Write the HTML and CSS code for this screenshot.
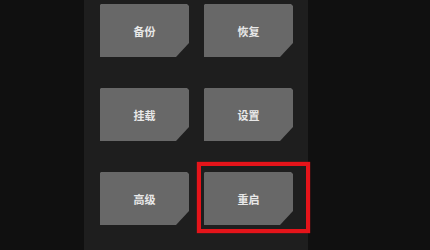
FILE: index.html
```html
<!DOCTYPE html>
<html lang="zh-CN">
<head>
<meta charset="utf-8">
<link rel="stylesheet" href="styles.css">
</head>
<body>
<div class="screen">
  <div class="panel">
    <div class="grid">
      <div class="cell"><div class="btn">备份</div></div>
      <div class="cell"><div class="btn">恢复</div></div>
      <div class="cell"><div class="btn">挂载</div></div>
      <div class="cell"><div class="btn">设置</div></div>
      <div class="cell"><div class="btn">高级</div></div>
      <div class="cell"><div class="btn">重启</div><span class="highlight"></span></div>
    </div>
  </div>
</div>
</body>
</html>
```
FILE: styles.css
```css
html, body {
  margin: 0;
  padding: 0;
  background: #101010;
}
.screen {
  width: 430px;
  height: 250px;
  background: #101010;
  overflow: hidden;
}
.panel {
  margin-left: 84px;
  width: 224px;
  height: 250px;
  background: #1e1e1e;
  box-sizing: border-box;
  padding: 4px 15px 0 16px;
}
.grid {
  display: grid;
  grid-template-columns: 89px 89px;
  grid-auto-rows: 53px;
  column-gap: 15px;
  row-gap: 31px;
}
.cell {
  position: relative;
}
.btn {
  width: 100%;
  height: 100%;
  background: #686868;
  color: #e8e8e8;
  font-family: "Noto Sans CJK SC", "Noto Sans", sans-serif;
  font-size: 11px;
  font-weight: 700;
  display: flex;
  align-items: center;
  justify-content: center;
  clip-path: polygon(1px 0, calc(100% - 2px) 0, 100% 2px, 100% calc(100% - 14px), calc(100% - 13px) 100%, 0 100%, 0 1px);
}
.highlight {
  position: absolute;
  left: -7px;
  top: -10px;
  right: -17px;
  bottom: -8px;
  border: 4px solid #e5141a;
  box-shadow: 0 0 1px #e5141a;
}
```
